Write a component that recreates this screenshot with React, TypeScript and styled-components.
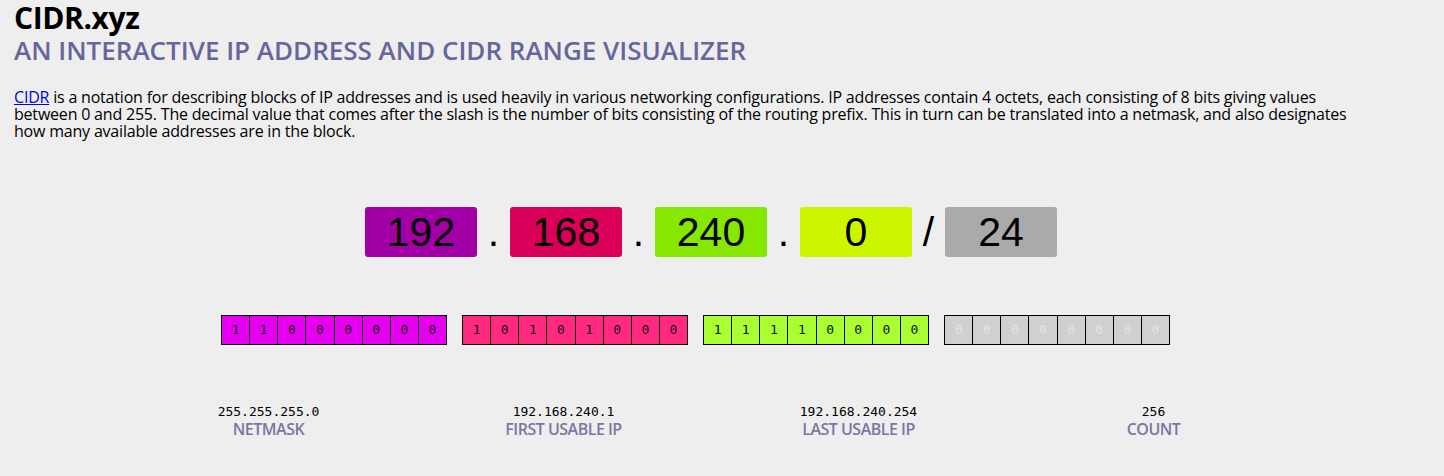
import React from "react";
import styled, { createGlobalStyle } from "styled-components";

const GlobalStyle = createGlobalStyle`
  html, body { margin: 0; padding: 0; background: #eeeeee; }
  body { font-family: "Open Sans", "Noto Sans", sans-serif; color: #000; }
`;

const Page = styled.main`
  padding: 0 14px;
`;

const Title = styled.h1`
  margin: 0;
  padding-top: 1px;
  font-size: 30px;
  line-height: 34px;
  font-weight: 700;
  letter-spacing: -0.4px;
  color: #000;
`;

const Subtitle = styled.h2`
  margin: 0;
  font-size: 26px;
  line-height: 30px;
  font-weight: 600;
  letter-spacing: 0;
  color: #66669a;
`;

const Intro = styled.p`
  margin: 24px 0 0;
  font-size: 16px;
  line-height: 17px;
  letter-spacing: -0.2px;
  a { color: #0000ee; }
`;

const IpRow = styled.div`
  display: flex;
  align-items: center;
  margin-top: 67px;
  padding-left: 351px;
`;

const Octet = styled.div<{ $bg: string }>`
  width: 112px;
  height: 50px;
  border-radius: 3px;
  background: ${(p) => p.$bg};
  font-family: "Liberation Sans", Arial, sans-serif;
  font-size: 41px;
  line-height: 50px;
  text-align: center;
  color: #000;
`;

const Sep = styled.div`
  width: 33px;
  text-align: center;
  font-family: "Liberation Sans", Arial, sans-serif;
  font-size: 41px;
  line-height: 50px;
  color: #000;
`;

const BitsRow = styled.div`
  display: flex;
  gap: 15px;
  margin-top: 58px;
  padding-left: 207px;
`;

const BitGroup = styled.div<{ $bg: string }>`
  display: flex;
  width: 226px;
  height: 30px;
  box-sizing: border-box;
  border: 1px solid #000;
  background: ${(p) => p.$bg};
`;

const Bit = styled.div<{ $off?: boolean }>`
  flex: 1;
  text-align: center;
  font-family: "DejaVu Sans Mono", monospace;
  font-size: 13px;
  line-height: 28px;
  color: ${(p) => (p.$off ? "#e4e4e4" : "#111111")};
  & + & { border-left: 1px solid #000; }
`;

const Info = styled.div`
  display: grid;
  grid-template-columns: repeat(4, 295px);
  margin-top: 59px;
  padding-left: 107px;
`;

const InfoCell = styled.div`
  text-align: center;
`;

const Value = styled.div`
  font-family: "DejaVu Sans Mono", monospace;
  font-size: 13px;
  line-height: 16px;
  color: #000;
`;

const Label = styled.div`
  font-size: 16px;
  line-height: 18px;
  font-weight: 600;
  letter-spacing: -0.5px;
  color: #7878a0;
`;

const octets = [
  { v: "192", bg: "#a200a6", bits: "#e600f0" },
  { v: "168", bg: "#da0059", bits: "#ff2a80" },
  { v: "240", bg: "#86e800", bits: "#aaff33" },
  { v: "0", bg: "#ccf500", bits: "#d0d0d0" },
];

const prefix = 24;

const info = [
  { v: "255.255.255.0", l: "NETMASK" },
  { v: "192.168.240.1", l: "FIRST USABLE IP" },
  { v: "192.168.240.254", l: "LAST USABLE IP" },
  { v: "256", l: "COUNT" },
];

export default function App() {
  return (
    <>
      <GlobalStyle />
      <Page>
        <Title>CIDR.xyz</Title>
        <Subtitle>AN INTERACTIVE IP ADDRESS AND CIDR RANGE VISUALIZER</Subtitle>
        <Intro>
          <a href="#cidr">CIDR</a> is a notation for describing blocks of IP addresses and is used heavily in various
          networking configurations. IP addresses contain 4 octets, each consisting of 8 bits giving values
          <br />
          between 0 and 255. The decimal value that comes after the slash is the number of bits consisting of the
          routing prefix. This in turn can be translated into a netmask, and also designates
          <br />
          how many available addresses are in the block.
        </Intro>
        <IpRow>
          {octets.map((o, i) => (
            <React.Fragment key={i}>
              <Octet $bg={o.bg}>{o.v}</Octet>
              <Sep>{i < 3 ? "." : "/"}</Sep>
            </React.Fragment>
          ))}
          <Octet $bg="#aaaaaa">{prefix}</Octet>
        </IpRow>
        <BitsRow>
          {octets.map((o, i) => {
            const bits = parseInt(o.v, 10).toString(2).padStart(8, "0").split("");
            return (
              <BitGroup key={i} $bg={o.bits}>
                {bits.map((b, j) => (
                  <Bit key={j} $off={i * 8 + j >= prefix}>
                    {b}
                  </Bit>
                ))}
              </BitGroup>
            );
          })}
        </BitsRow>
        <Info>
          {info.map((x) => (
            <InfoCell key={x.l}>
              <Value>{x.v}</Value>
              <Label>{x.l}</Label>
            </InfoCell>
          ))}
        </Info>
      </Page>
    </>
  );
}
